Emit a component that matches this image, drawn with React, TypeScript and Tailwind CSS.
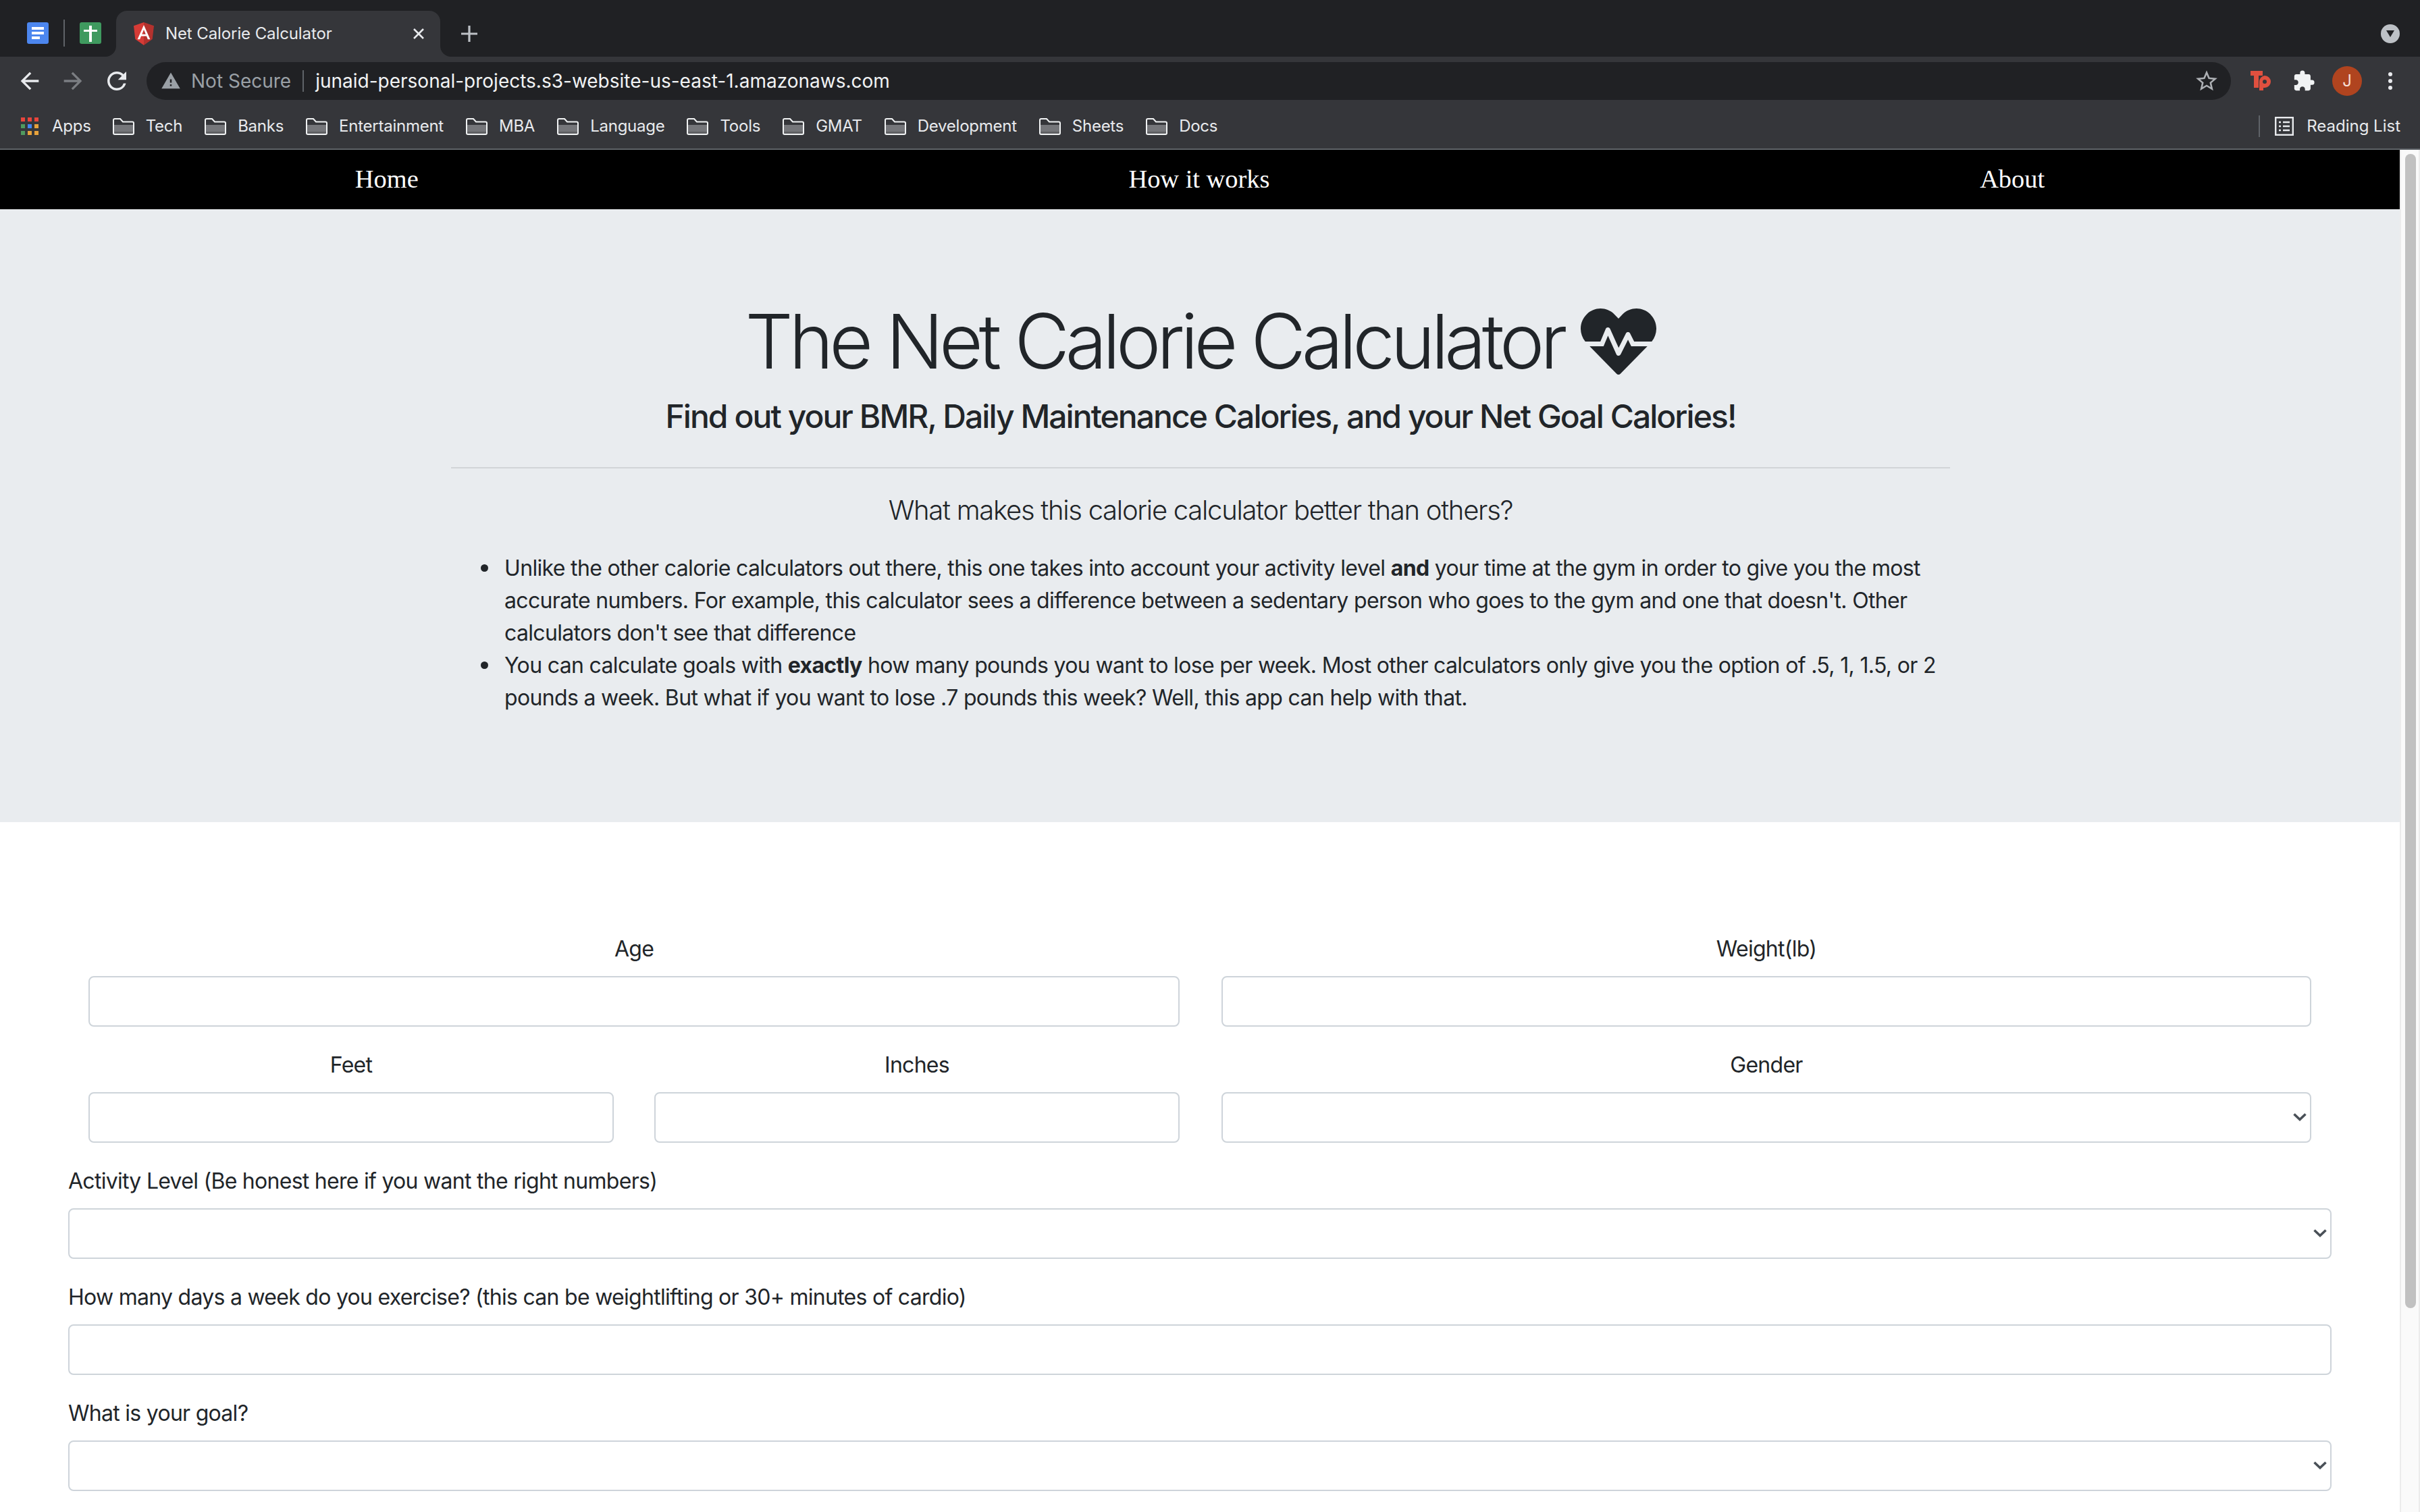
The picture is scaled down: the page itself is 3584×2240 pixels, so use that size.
import { FaHeartbeat } from 'react-icons/fa';
import { MdArrowBack, MdArrowForward, MdExtension, MdRefresh, MdStarBorder, MdWarning } from 'react-icons/md';

const bookmarks = ['Tech', 'Banks', 'Entertainment', 'MBA', 'Language', 'Tools', 'GMAT', 'Development', 'Sheets', 'Docs'];

function FolderIcon() {
  return (
    <svg width="32" height="25" viewBox="0 0 32 25" className="shrink-0">
      <rect x="2" y="10" width="28" height="10" fill="#75767a" />
      <rect x="2" y="20" width="28" height="3" fill="#5f6063" />
      <path d="M1 3a2 2 0 0 1 2-2h8l4 4.500h14a2 2 0 0 1 2 2V22a2 2 0 0 1-2 2H3a2 2 0 0 1-2-2z" fill="none" stroke="#f1f3f4" strokeWidth="2" />
    </svg>
  );
}

function AppsIcon() {
  const colors = ['#e8453c', '#e8453c', '#e8453c', '#4f9a5f', '#4285f4', '#e6a23c', '#4f9a5f', '#e6a23c', '#e6a23c'];
  return (
    <div className="grid grid-cols-3 gap-[4px] w-[26px] shrink-0">
      {colors.map((c, i) => (
        <div key={i} className="w-[6px] h-[6px]" style={{ backgroundColor: c }} />
      ))}
    </div>
  );
}

function TabStrip() {
  return (
    <div className="h-[84px] bg-[#202124] flex items-end relative">
      <div className="flex items-center h-[68px] pb-[2px] pl-[40px]">
        <div className="w-[32px] h-[32px] rounded-[3px] bg-[#4c86ee] flex flex-col justify-center gap-[3px] pl-[7px]">
          <div className="w-[18px] h-[4px] bg-white" />
          <div className="w-[18px] h-[4px] bg-white" />
          <div className="w-[12px] h-[4px] bg-white" />
        </div>
        <div className="w-[2px] h-[40px] bg-[#5f6368] mx-[22px]" />
        <div className="w-[32px] h-[32px] rounded-[3px] bg-[#3f9a5f] relative mr-[22px]">
          <div className="absolute left-[14px] top-[5px] w-[4px] h-[24px] bg-white" />
          <div className="absolute left-[6px] top-[11px] w-[20px] h-[3px] bg-white" />
        </div>
      </div>
      {/* Active tab */}
      <div className="relative w-[480px] h-[68px] bg-[#35363a] rounded-t-[16px] flex items-center pl-[25px]">
        <svg width="16" height="16" viewBox="0 0 16 16" className="absolute -left-[16px] bottom-0">
          <path d="M16 0v16H0a16 16 0 0 0 16-16z" fill="#35363a" />
        </svg>
        <svg width="16" height="16" viewBox="0 0 16 16" className="absolute -right-[16px] bottom-0">
          <path d="M0 0v16h16A16 16 0 0 1 0 0z" fill="#35363a" />
        </svg>
        <svg width="32" height="34" viewBox="0 0 32 34" className="shrink-0">
          <path d="M16 0 1 5.200l2.300 19.700L16 34z" fill="#d63b36" />
          <path d="M16 0l15 5.200-2.300 19.700L16 34z" fill="#b3322e" />
          <path d="M16 4 6.600 25.200h3.500l1.900-4.700h8l1.900 4.700h3.500zm2.800 13.700h-5.600L16 11z" fill="#fff" />
        </svg>
        <span className="ml-[16px] text-[24px] tracking-[-0.1px] text-[#e8eaed] whitespace-nowrap">Net Calorie Calculator</span>
        <svg width="16" height="16" viewBox="0 0 16 16" className="absolute left-[440px] top-[26px]">
          <path d="M1 1l14 14M15 1 1 15" stroke="#e8eaed" strokeWidth="2.600" />
        </svg>
      </div>
      <svg width="24" height="24" viewBox="0 0 24 24" className="ml-[31px] mb-[22px]">
        <path d="M12 0v24M0 12h24" stroke="#bdc1c6" strokeWidth="3.200" />
      </svg>
      <div className="absolute right-[30px] top-[36px] w-[28px] h-[28px] rounded-full bg-[#bdc1c6] flex items-center justify-center">
        <svg width="14" height="10" viewBox="0 0 14 10">
          <path d="M1 0h12L7 10z" fill="#202124" />
        </svg>
      </div>
    </div>
  );
}

function Toolbar() {
  return (
    <div className="h-[64px] bg-[#35363a] flex items-center pt-[8px]">
      <div className="w-[217px] flex items-center pl-[24px] gap-[24px] shrink-0">
        <MdArrowBack size={40} color="#e8eaed" />
        <MdArrowForward size={40} color="#7b7e82" />
        <MdRefresh size={42} color="#e8eaed" />
      </div>
      <div className="w-[3087px] h-[56px] rounded-full bg-[#202124] flex items-center pl-[21px] pr-[17px]">
        <MdWarning size={30} color="#9aa0a6" />
        <span className="ml-[15px] text-[28px] text-[#9aa0a6]">Not Secure</span>
        <div className="w-[2px] h-[32px] bg-[#5f6368] mx-[17px]" />
        <span className="text-[28px] text-[#f1f3f4]">junaid-personal-projects.s3-website-us-east-1.amazonaws.com</span>
        <div className="flex-1" />
        <MdStarBorder size={38} color="#aeb1b5" />
      </div>
      <div className="flex items-center flex-1 pl-[29px]">
        <svg width="30" height="30" viewBox="0 0 30 30" className="shrink-0">
          <path d="M0 0h18v7h-6v18H5V7H0z" fill="#e0503f" />
          <path fillRule="evenodd" d="M21 7a9 9 0 0 1 0 18h-2v4h-6V16a9 9 0 0 1 8-9zm0 6a3 3 0 1 0 0 6 3 3 0 0 0 0-6z" fill="#e0503f" />
        </svg>
        <MdExtension size={34} color="#f1f3f4" className="ml-[32px]" />
        <div className="ml-[25px] w-[44px] h-[44px] rounded-full bg-[#b0441f] flex items-center justify-center text-[24px] text-[#f6dfd6]">J</div>
        <div className="ml-[39px] flex flex-col gap-[4px]">
          <div className="w-[6px] h-[6px] rounded-full bg-[#e8eaed]" />
          <div className="w-[6px] h-[6px] rounded-full bg-[#e8eaed]" />
          <div className="w-[6px] h-[6px] rounded-full bg-[#e8eaed]" />
        </div>
      </div>
    </div>
  );
}

function BookmarksBar() {
  return (
    <div className="h-[74px] bg-[#35363a] border-b-[2px] border-[#5f6368] flex items-center pt-[6px] pl-[31px] text-[24px] tracking-[-0.25px] text-[#e8eaed]">
      <AppsIcon />
      <span className="ml-[20px] mr-[32px]">Apps</span>
      {bookmarks.map((b) => (
        <div key={b} className="flex items-center gap-[17px] mr-[33px]">
          <FolderIcon />
          <span>{b}</span>
        </div>
      ))}
      <div className="flex-1" />
      <div className="w-[2px] h-[32px] bg-[#5f6368]" />
      <svg width="28" height="28" viewBox="0 0 28 28" className="ml-[22px] shrink-0">
        <rect x="1.200" y="1.200" width="25.600" height="25.600" fill="none" stroke="#e8eaed" strokeWidth="2.400" />
        <path d="M6 8h3M12 8h10M6 14h3M12 14h10M6 20h3M12 20h10" stroke="#e8eaed" strokeWidth="2.400" />
      </svg>
      <span className="ml-[19px] mr-[29px] tracking-normal">Reading List</span>
    </div>
  );
}

function Chevron() {
  return (
    <svg width="20" height="14" viewBox="0 0 20 14" className="absolute right-[7px] top-[30px] pointer-events-none">
      <path d="M1.500 2.500 10 10.500l8.500-8" fill="none" stroke="#495057" strokeWidth="3.600" />
    </svg>
  );
}

function TextField() {
  return <input type="text" className="block w-full h-[75px] bg-white border-2 border-[#ced4da] rounded-[8px] px-[24px] text-[32px]" />;
}

function SelectField() {
  return (
    <div className="relative">
      <select className="block w-full h-[75px] appearance-none bg-white border-2 border-[#ced4da] rounded-[8px] px-[24px] text-[32px]" />
      <Chevron />
    </div>
  );
}

function Field({ label, center, children }: { label: string; center?: boolean; children: React.ReactNode }) {
  return (
    <div className={`mb-[33px] ${center ? 'text-center' : ''}`}>
      <label className="block mb-[16px] text-[32px] leading-[48px] tracking-[-0.72px]">{label}</label>
      {children}
    </div>
  );
}

export default function App() {
  return (
    <div className="w-[3584px] h-[2240px] overflow-hidden flex flex-col bg-white text-[#212529] font-['Inter',sans-serif]">
      <TabStrip />
      <Toolbar />
      <BookmarksBar />

      <div className="flex flex-1 min-h-0">
        <main className="flex-1 min-w-0">
          {/* Nav */}
          <nav className="h-[88px] bg-black flex items-center justify-around font-['Liberation_Serif',serif] text-[38.4px] text-white">
            <a>Home</a>
            <a>How it works</a>
            <a>About</a>
          </nav>

          {/* Jumbotron */}
          <section className="h-[908px] bg-[#e9ecef] pt-[128px]">
            <div className="w-[2220px] ml-[668px]">
              <h1 className="text-center text-[112px] leading-[134px] font-light tracking-[-6.18px] mb-[16px]">
                The Net Calorie Calculator <FaHeartbeat className="inline align-[-16px]" />
              </h1>
              <h4 className="text-center text-[48px] leading-[58px] font-medium tracking-[-1.95px]">
                Find out your BMR, Daily Maintenance Calories, and your Net Goal Calories!
              </h4>
              <hr className="mt-[46px] mb-[32px] border-t-2 border-[#d2d4d7]" />
              <p className="text-center text-[40px] leading-[60px] font-light tracking-[-1.27px] mb-[32px]">
                What makes this calorie calculator better than others?
              </p>
              <ul className="pl-[79px] text-[32px] leading-[48px] tracking-[-0.66px]">
                <li className="relative before:absolute before:-left-[35px] before:top-[18px] before:w-[11px] before:h-[11px] before:rounded-full before:bg-[#212529]">
                  Unlike the other calorie calculators out there, this one takes into account your activity level <b>and</b> your time at the gym in order to give you the most accurate numbers. For example, this calculator sees a difference between a sedentary person who goes to the gym and one that doesn't. Other calculators don't see that difference
                </li>
                <li className="relative before:absolute before:-left-[35px] before:top-[18px] before:w-[11px] before:h-[11px] before:rounded-full before:bg-[#212529]">
                  You can calculate goals with <b>exactly</b> how many pounds you want to lose per week. Most other calculators only give you the option of .5, 1, 1.5, or 2 pounds a week. But what if you want to lose .7 pounds this week? Well, this app can help with that.
                </li>
              </ul>
            </div>
          </section>

          {/* Form */}
          <form className="px-[101px] pt-[164px]">
            <div className="grid grid-cols-2">
              <div className="px-[30px]">
                <Field label="Age" center><TextField /></Field>
              </div>
              <div className="pl-[32px] pr-[30px]">
                <Field label="Weight(lb)" center><TextField /></Field>
              </div>
            </div>
            <div className="grid grid-cols-4">
              <div className="px-[30px]">
                <Field label="Feet" center><TextField /></Field>
              </div>
              <div className="px-[30px]">
                <Field label="Inches" center><TextField /></Field>
              </div>
              <div className="col-span-2 pl-[32px] pr-[30px]">
                <Field label="Gender" center><SelectField /></Field>
              </div>
            </div>
            <Field label="Activity Level (Be honest here if you want the right numbers)"><SelectField /></Field>
            <Field label="How many days a week do you exercise? (this can be weightlifting or 30+ minutes of cardio)"><TextField /></Field>
            <Field label="What is your goal?"><SelectField /></Field>
          </form>
        </main>

        {/* Scrollbar */}
        <aside className="w-[30px] shrink-0 bg-[#fafafa] border-x-2 border-[#ececec] pt-[6px] pl-[6px]">
          <div className="w-[16px] h-[1710px] rounded-full bg-[#c1c1c1]" />
        </aside>
      </div>
    </div>
  );
}
